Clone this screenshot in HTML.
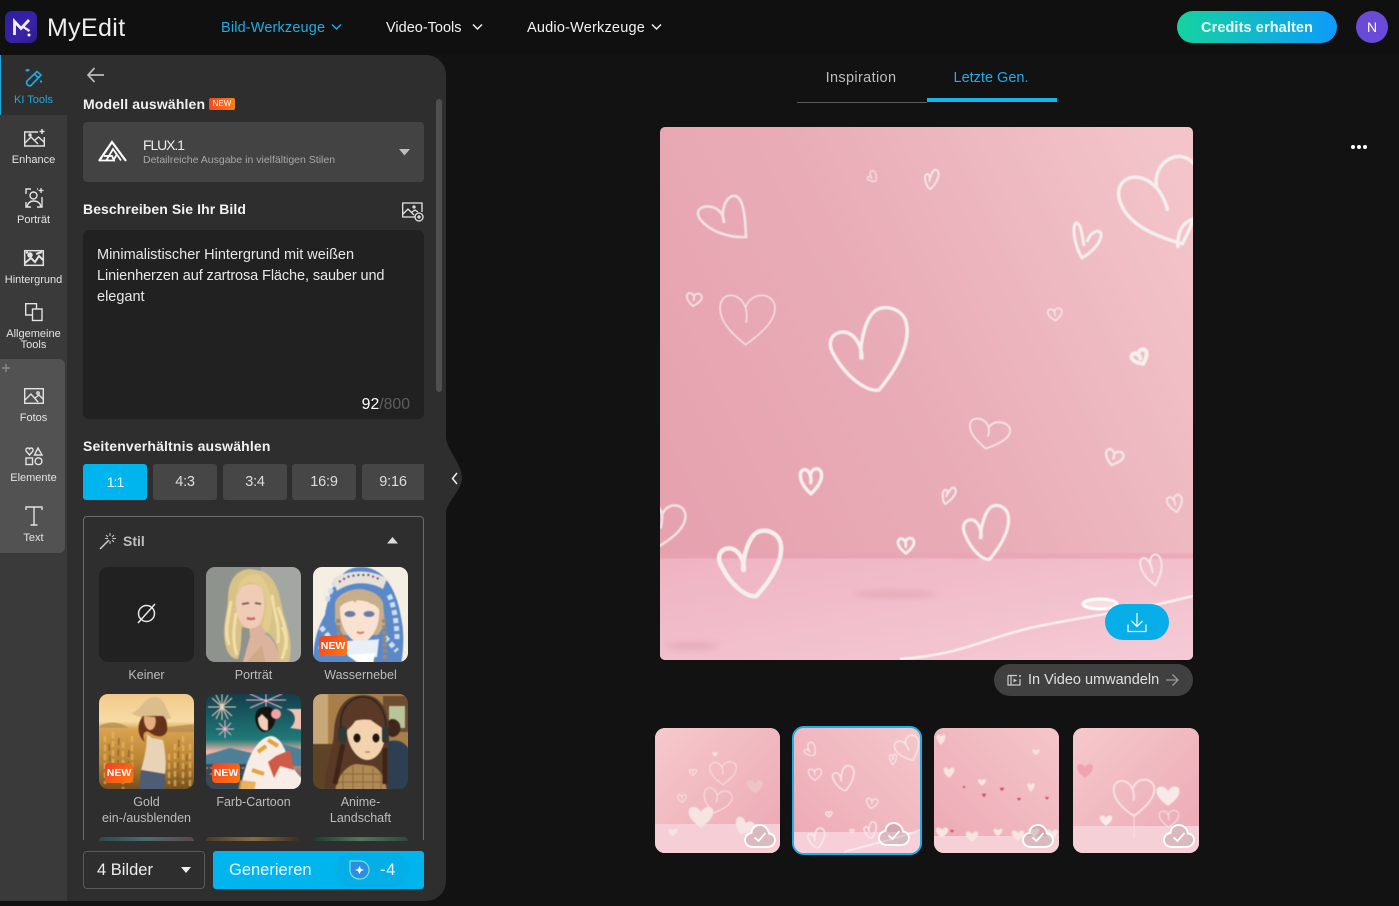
<!DOCTYPE html>
<html lang="de"><head><meta charset="utf-8"><title>MyEdit</title>
<style>
*{box-sizing:border-box;margin:0;padding:0}
html,body{width:1399px;height:906px;overflow:hidden;background:#121212;font-family:"Liberation Sans",sans-serif;color:#eee}
.a{position:absolute}
.t{position:absolute;white-space:nowrap;line-height:1}
.c{transform:translateX(-50%);text-align:center}
svg{display:block;overflow:visible}
.rl{position:absolute;left:0;width:67px;text-align:center;font-size:11px;line-height:11px;color:#e4e4e4}
.ic{position:absolute;fill:none;stroke:#e2e2e2;stroke-width:1.4}
.nav{position:absolute;top:21px;font-size:14.5px;line-height:15px;white-space:nowrap;color:#f2f2f2}
.ar{position:absolute;top:464px;height:36px;background:#464646;border-radius:3px;font-size:14px;line-height:37px;text-align:center;color:#ddd;letter-spacing:-.2px}
.st{position:absolute;width:95px;height:95px;border-radius:9px;overflow:hidden}
.st svg{filter:blur(.45px)}
.new{position:absolute;left:6px;top:69px;width:28px;height:20px;border-radius:4px;background:linear-gradient(135deg,#ef3f25,#ff7a10);font-size:10.5px;font-weight:bold;line-height:20px;text-align:center;color:#fff}
.sl{position:absolute;width:107px;text-align:center;font-size:12.5px;line-height:16px;color:#bdbdbd}
.th{position:absolute;overflow:hidden;border-radius:10px}
.hd{font-size:14px;font-weight:bold;color:#f2f2f2;letter-spacing:.08px}
</style></head><body>
<svg width="0" height="0" style="position:absolute"><defs>
<path id="h" d="M0 42C-30 22-46 4-44-16C-42-36-14-38-3-14C0-6 0 4-1 8M-3-14C4-40 40-40 44-18C47 4 24 24 0 42" fill="none" vector-effect="non-scaling-stroke" stroke-linecap="round" stroke-linejoin="round"/>
<path id="j" transform="translate(-868 -349)" d="M861 358C860 340 866 318 875 311C884 304 902 308 906 322C911 340 900 365 879 390C867 392 847 378 834 355C826 342 832 332 844 332C854 333 862 345 862 358" fill="none" vector-effect="non-scaling-stroke" stroke-linecap="round" stroke-linejoin="round"/>
<path id="f" d="M0 42C-30 20-46 2-44-18C-42-38-12-38 0-14C12-38 42-38 44-18C46 2 30 20 0 42Z"/>
<linearGradient id="bgm" x1="0" y1=".62" x2="1" y2=".12"><stop offset="0" stop-color="#e6a2af"/><stop offset=".45" stop-color="#e9adb7"/><stop offset="1" stop-color="#f3c5ca"/></linearGradient>
<linearGradient id="flm" x1="0" y1="0" x2="1" y2="1"><stop offset="0" stop-color="#efb3c2"/><stop offset="1" stop-color="#f5cbd6"/></linearGradient>
<linearGradient id="tbg" x1="0" y1="1" x2="1" y2="0"><stop offset="0" stop-color="#eda9b5"/><stop offset="1" stop-color="#f4c6ca"/></linearGradient>
<linearGradient id="tbg2" x1="0" y1="0" x2="1" y2="1"><stop offset="0" stop-color="#f5c9cc"/><stop offset="1" stop-color="#eca8b4"/></linearGradient>
<filter id="b" x="-5%" y="-5%" width="110%" height="110%"><feGaussianBlur stdDeviation=".5"/></filter>
<filter id="b4" x="-30%" y="-100%" width="160%" height="300%"><feGaussianBlur stdDeviation="3.500"/></filter>
<g id="cloud"><path d="M8 25H22C27 25 30 21.500 30 18C30 14 27 11.500 24 11.500C23 6 19 3 15 3C10 3 6.500 6.500 6.500 11C2.500 11.500 0 14.500 0 18C0 22 3.500 25 8 25Z" fill="rgba(120,110,110,.22)" stroke="#fff" stroke-width="1.900"/><path d="M9.500 15.500L13.500 19L20.500 11" fill="none" stroke="#fff" stroke-width="1.800"/></g>
</defs></svg>

<!-- header -->
<div class="a" style="left:0;top:0;width:1399px;height:55px;background:#101010"></div>
<div class="a" style="left:5px;top:11px;width:32px;height:32px;border-radius:7px;background:linear-gradient(135deg,#2a1fa0,#3a22a8 60%,#2c1a8c)"></div>
<svg class="a" style="left:5px;top:11px" width="32" height="32"><path d="M9.500 24V10.500L16 17.500L24 9" fill="none" stroke="#f4f0ff" stroke-width="2.800"/><path d="M18.500 16L24.500 20" fill="none" stroke="#e9e4ff" stroke-width="2.400"/><circle cx="24" cy="24" r="1.500" fill="#fff"/></svg>
<div class="t" style="left:47px;top:16px;font-size:25px;letter-spacing:.35px;color:#eee">MyEdit</div>
<div class="nav" style="left:221px;color:#1eabe6;letter-spacing:.15px">Bild-Werkzeuge</div>
<svg class="a" style="left:331px;top:23px" width="11" height="8"><path d="M1 1.500L5.500 6L10 1.500" fill="none" stroke="#1eabe6" stroke-width="1.500"/></svg>
<div class="nav" style="left:386px">Video-Tools</div>
<svg class="a" style="left:472px;top:23px" width="11" height="8"><path d="M1 1.500L5.500 6L10 1.500" fill="none" stroke="#eee" stroke-width="1.500"/></svg>
<div class="nav" style="left:527px;letter-spacing:.2px">Audio-Werkzeuge</div>
<svg class="a" style="left:651px;top:23px" width="11" height="8"><path d="M1 1.500L5.500 6L10 1.500" fill="none" stroke="#eee" stroke-width="1.500"/></svg>
<div class="a" style="left:1177px;top:11px;width:160px;height:32px;border-radius:16px;background:linear-gradient(90deg,#15d39f,#0f9bfb);text-align:center;font-size:14.500px;font-weight:bold;line-height:34px;color:#eafffa;letter-spacing:.1px">Credits erhalten</div>
<div class="a" style="left:1356px;top:11px;width:32px;height:32px;border-radius:50%;background:#6a4bd8;text-align:center;font-size:14px;line-height:33px;color:#fff">N</div>

<!-- side panel -->
<div class="a" style="left:0;top:55px;width:446px;height:846px;background:#2e2e2e;border-radius:0 20px 20px 0"></div>
<svg class="a" style="left:440px;top:430px" width="26" height="90"><path d="M6 8C8 22 22 34 22 48C22 60 8 70 6 82Z" fill="#2e2e2e"/><path d="M17 43L12.500 48.500L17 54" fill="none" stroke="#f0f0f0" stroke-width="1.500"/></svg>
<div class="a" style="left:0;top:115px;width:67px;height:786px;background:#3a3a3a"></div>
<div class="a" style="left:0;top:55px;width:1px;height:60px;background:#1ea6dc"></div>
<div class="a" style="left:0;top:359px;width:65px;height:194px;background:#525252;border-radius:0 6px 6px 0"></div>
<svg class="a" style="left:2px;top:364px" width="8" height="8"><path d="M4 0V8M0 4H8" stroke="#8a8a8a" stroke-width="1.400"/></svg>

<!-- rail icons -->
<svg class="ic" style="left:24px;top:67px;stroke:#22a7dc;stroke-width:1.700" width="20" height="20"><path d="M3 14L13 4.500L17 8L7 18.500Q5.500 19.500 3.500 18Q1.800 15.500 3 14ZM10.500 7L14 10.500"/><path d="M3 2L4 4.500M1.500 3.500L5.500 3M17 13.500V15.500M16 14.500H18"/></svg>
<svg class="ic" style="left:24px;top:129px" width="21" height="18"><path d="M14 3H.7V17H20.300V8"/><path d="M1 14L7 8L14 15M11 11L14.500 8L20 13" /><circle cx="6" cy="6" r="1" fill="#e2e2e2"/><path d="M18 0V5M15.500 2.500H20.500" stroke-width="1.500"/></svg>
<svg class="ic" style="left:25px;top:188px" width="19" height="21"><path d="M1 6V1H6M1 14V19H6M12 1H13M17 9V19H12"/><circle cx="8.500" cy="7.500" r="3.500"/><path d="M2 19C3 14 6 13 8.500 13C12 13 15 14 16 19"/><path d="M16 0V5M13.500 2.500H18.500" stroke-width="1.300"/></svg>
<svg class="ic" style="left:24px;top:250px;stroke-width:1.500" width="20" height="16"><rect x=".7" y=".7" width="18.600" height="14.600"/><circle cx="6" cy="5" r="2" fill="#e2e2e2"/><path d="M1 13L7 8L11 12L15 6L19 10M12 4L18 2M2 3L4 2" stroke-width="2"/></svg>
<svg class="ic" style="left:25px;top:303px" width="18" height="18"><path d="M7 12H.7V.7H11.500V6"/><rect x="7.500" y="6" width="9.500" height="11.500"/></svg>
<svg class="ic" style="left:24px;top:388px" width="20" height="16"><rect x=".7" y=".7" width="18.600" height="14.600"/><path d="M1 12L7 6L14 14M11 10L15 7L19 11"/><circle cx="14" cy="5" r="1.200"/></svg>
<svg class="ic" style="left:25px;top:447px" width="18" height="18"><path d="M4.500 8L1 4Q.5 1 3 1Q4 1 4.500 2Q5 1 6 1Q8.500 1 8 4Z"/><path d="M13 1L17 8H9.500Z"/><rect x="1" y="11" width="6.500" height="6.500"/><circle cx="13.500" cy="14.200" r="3.400"/></svg>
<svg class="ic" style="left:25px;top:506px;stroke-width:1.400" width="18" height="20"><path d="M1 4V1H17V4M9 1V18.500M5.500 19H12.500"/></svg>
<div class="rl" style="top:95px;color:#22a7dc">KI Tools</div>
<div class="rl" style="top:155px">Enhance</div>
<div class="rl" style="top:215px">Porträt</div>
<div class="rl" style="top:275px">Hintergrund</div>
<div class="rl" style="top:329px">Allgemeine<br>Tools</div>
<div class="rl" style="top:413px">Fotos</div>
<div class="rl" style="top:473px">Elemente</div>
<div class="rl" style="top:533px">Text</div>

<!-- panel content -->
<svg class="a" style="left:86px;top:66px" width="19" height="18"><path d="M8.500 2L2 9L8.500 16M2 9H18" fill="none" stroke="#bbb" stroke-width="1.700"/></svg>
<div class="t hd" style="left:83px;top:97px;letter-spacing:.15px">Modell auswählen</div>
<div class="a" style="left:209px;top:98px;width:26px;height:12px;border-radius:2px;background:linear-gradient(90deg,#f14a22,#fb7d15);font-size:8px;line-height:12px;text-align:center;color:#fff">NEW</div>
<div class="a" style="left:83px;top:122px;width:341px;height:60px;background:#434343;border-radius:4px"></div>
<svg class="a" style="left:98px;top:140px" width="30" height="22"><path d="M1 21L14 2L28 21" fill="none" stroke="#fff" stroke-width="2.200"/><path d="M1 20.500H16L14 16H6M8 21L15 9L23 20.500M15 21L19 14" fill="none" stroke="#fff" stroke-width="1.800"/></svg>
<div class="t" style="left:143px;top:138px;font-size:14px;letter-spacing:-1.100px;color:#eee">FLUX.1</div>
<div class="t" style="left:143px;top:155px;font-size:10.500px;color:#a8a8a8">Detailreiche Ausgabe in vielfältigen Stilen</div>
<svg class="a" style="left:399px;top:149px" width="11" height="7"><path d="M0 0H11L5.500 6.500Z" fill="#bdbdbd"/></svg>
<div class="t hd" style="left:83px;top:202px">Beschreiben Sie Ihr Bild</div>
<svg class="a" style="left:402px;top:202px;fill:none;stroke:#e6e6e6;stroke-width:1.300" width="22" height="20"><path d="M14 15H.7V1H20V10"/><path d="M1 12L6 7L12 13M10 10L13 8L16 10"/><circle cx="12" cy="5" r="1"/><circle cx="17" cy="15" r="4" fill="#2e2e2e"/><path d="M17 13V17M15 15H19"/></svg>
<div class="a" style="left:83px;top:230px;width:341px;height:189px;background:#212121;border-radius:6px"></div>
<div class="a" style="left:97px;top:245px;width:310px;font-size:14.500px;line-height:21px;color:#e8e8e8">Minimalistischer Hintergrund mit weißen<br><span style="letter-spacing:-.1px">Linienherzen auf zartrosa Fläche, sauber und</span><br>elegant</div>
<div class="t" style="right:989px;top:397px;font-size:15.800px;color:#fff">92<span style="color:#5d5d5d">/800</span></div>
<div class="a" style="left:436px;top:99px;width:6px;height:293px;background:#4f4f4f;border-radius:3px"></div>
<div class="t hd" style="left:83px;top:439px;letter-spacing:.15px">Seitenverhältnis auswählen</div>
<div class="ar" style="left:83px;width:64px;background:#00b5ee;color:#e8fbff;letter-spacing:-1px">1:1</div>
<div class="ar" style="left:153px;width:64px;font-size:14.500px">4:3</div>
<div class="ar" style="left:223px;width:64px;font-size:14.500px">3:4</div>
<div class="ar" style="left:292px;width:64px;font-size:14.500px">16:9</div>
<div class="ar" style="left:362px;width:62px;border-radius:3px 0 0 3px;font-size:14.500px">9:16</div>

<div class="a" style="left:83px;top:516px;width:341px;height:324px;border:1px solid #6a6a6a;border-bottom:0;border-radius:4px 4px 0 0"></div>
<svg class="a" style="left:99px;top:532px" width="18" height="18"><path d="M1 17L10 8" stroke="#ccc" stroke-width="1.500"/><path d="M11 1V4M11 9V12M6 6.500H9M13.500 6.500H17M7 3L9 5M15 3L13 5M15 10L13 8" stroke="#ccc" stroke-width="1"/></svg>
<div class="t" style="left:123px;top:534px;font-size:14px;font-weight:bold;color:#bdbdbd">Stil</div>
<svg class="a" style="left:387px;top:537px" width="11" height="7"><path d="M0 6.500H11L5.500 0Z" fill="#dcdcdc"/></svg>

<!-- styles row 1 -->
<div class="st" style="left:99px;top:567px;background:#212121"></div>
<svg class="a" style="left:136px;top:603px" width="21" height="21"><circle cx="10.500" cy="10.500" r="8" fill="none" stroke="#e8e8e8" stroke-width="1.500"/><path d="M2 20L19 1" stroke="#e8e8e8" stroke-width="1.500"/></svg>
<div class="st" style="left:206px;top:567px"><svg width="95" height="95" viewBox="0 0 95 95">
<rect x="-3" y="-3" width="101" height="101" fill="#8f938e"/><rect x="55" y="-3" width="43" height="101" fill="#a3a7a2"/>
<path d="M44 2C28 3 22 16 22 32C21 48 15 62 20 80C22 88 27 92 32 92C36 80 35 66 36 60L62 66C70 72 74 84 72 98H82C87 84 84 66 79 52C74 36 74 12 56 4Z" fill="#d9c287"/>
<path d="M25 34C23 50 18 62 23 78M30 46C28 60 26 74 31 88M66 28C68 46 74 56 72 76M72 40C76 52 82 62 80 82M76 60C82 70 80 80 76 92" stroke="#f1dfa8" stroke-width="3" fill="none"/>
<path d="M43 58L44 70L36 98H74C73 84 68 72 60 68L55 58Z" fill="#dcb49c"/>
<path d="M31 26C28 40 31 52 37 58C42 63 49 62 53 58C59 50 60 32 56 22C50 14 36 16 31 26Z" fill="#f0ccb6"/>
<path d="M32 28C36 16 46 10 56 22C62 32 60 48 56 60L62 66C68 50 68 24 54 8C42 4 30 14 32 28Z" fill="#e2cb8f"/>
<path d="M36 37L43 36M49 36L55 37" stroke="#6a5d52" stroke-width="1.800"/><path d="M41 51Q45 53 49 51" stroke="#c06a68" stroke-width="2.500" fill="none"/>
<path d="M38 98L56 78L60 98Z" fill="#cda98a"/>
</svg></div>
<div class="st" style="left:313px;top:567px"><svg width="95" height="95" viewBox="0 0 95 95">
<rect x="-3" y="-3" width="101" height="101" fill="#f5eee3"/>
<path d="M0 98C0 76 4 62 12 48C16 25 25 0 48 0C72 0 84 25 88 50C92 68 90 85 88 98Z" fill="#5b89c8"/>
<path d="M14 34C18 20 24 12 30 8M76 28C82 40 84 60 84 72M8 60L16 70M6 82L20 78M72 70L84 84" stroke="#cfe0f2" stroke-width="5" fill="none" stroke-dasharray="5 3"/>
<path d="M20 12C35 2 60 2 74 12L70 22C56 14 38 14 24 24Z" fill="#e6e2da"/>
<path d="M26 15L34 10L44 8L56 8L66 12" stroke="#7a4a6a" stroke-width="2" stroke-dasharray="2 3" fill="none"/>
<path d="M22 36C28 18 64 18 70 36L72 58L65 68H30L22 55Z" fill="#c9ae8c"/>
<path d="M27 40C36 30 58 32 66 42C68 58 58 76 47 76C35 74 26 58 27 40Z" fill="#f9e2d2"/>
<path d="M26 40L34 26L42 36L48 26L56 36L68 40C66 28 56 22 46 22C36 22 28 28 26 40Z" fill="#c9ae8c"/>
<ellipse cx="37" cy="47" rx="5.500" ry="3" fill="#6a7ba0"/><ellipse cx="56" cy="47" rx="5.500" ry="3" fill="#6a7ba0"/>
<path d="M44 65Q47 67 51 65" stroke="#d8796b" stroke-width="2" fill="none"/>
<path d="M28 76C36 72 56 74 66 72L64 90H36Z" fill="#e8eff6"/>
<path d="M25 52L27 84M71 52L72 92" stroke="#a08a6c" stroke-width="4" stroke-dasharray="4 2"/>
<path d="M34 88L48 98H60L62 86Z" fill="#fff"/>
</svg><div class="new">NEW</div></div>
<div class="sl" style="left:93px;top:667px">Keiner</div>
<div class="sl" style="left:200px;top:667px">Porträt</div>
<div class="sl" style="left:307px;top:667px">Wassernebel</div>

<!-- styles row 2 -->
<div class="st" style="left:99px;top:694px"><svg width="95" height="95" viewBox="0 0 95 95">
<defs><linearGradient id="gs" x1="0" y1="0" x2="0" y2="1"><stop offset="0" stop-color="#f0c888"/><stop offset=".3" stop-color="#f8dca4"/><stop offset=".38" stop-color="#d9a24e"/><stop offset=".7" stop-color="#b98334"/><stop offset="1" stop-color="#6e4a1c"/></linearGradient></defs>
<rect x="-3" y="-3" width="101" height="101" fill="url(#gs)"/>
<path d="M0 32Q16 24 30 34H0ZM62 34L95 30V38H62Z" fill="#b58c50" opacity=".8"/>
<path d="M6 42V90M14 38V85M24 48V95M33 42V88M76 50V95M84 42V90M70 60V90M91 50V95" stroke="#e8b862" stroke-width="2.500" stroke-dasharray="6 3" opacity=".7"/>
<path d="M10 50L12 92M20 44L18 90M30 56L28 95M80 46L78 95M88 60L86 95" stroke="#7f5720" stroke-width="1.500" stroke-dasharray="7 4" opacity=".7"/>
<path d="M32 19C42 17 44 5 54 3C64 2 66 12 72 24C62 28 44 26 32 19Z" fill="#dcbd8c"/>
<path d="M44 22C36 32 40 44 46 48C42 40 46 36 50 38C60 46 70 42 68 32C68 26 66 24 64 22Z" fill="#67321a"/>
<path d="M45 22C44 30 48 37 52 36C56 35 58 28 56 23Z" fill="#e7ab7c"/>
<path d="M48 40L53 44L64 46C66 56 68 70 66 80L42 76C46 62 48 52 48 40Z" fill="#e8d3b6"/>
<path d="M42 76L66 80V98H40Z" fill="#4e5c74"/>
</svg><div class="new">NEW</div></div>
<div class="st" style="left:206px;top:694px"><svg width="95" height="95" viewBox="0 0 95 95">
<defs><linearGradient id="cs" x1="0" y1="0" x2="0" y2="1"><stop offset="0" stop-color="#123a48"/><stop offset=".48" stop-color="#1f7b78"/><stop offset=".6" stop-color="#f3b3a6"/><stop offset="1" stop-color="#32424e"/></linearGradient></defs>
<rect x="-3" y="-3" width="101" height="101" fill="url(#cs)"/>
<g stroke="#f4d4bd" stroke-width="1"><path d="M2 13L30 13M16 0L16 26M6 4L26 22M26 4L6 22M10 1L22 25M22 1L10 25"/></g>
<g stroke="#f0b8d0" stroke-width="1"><path d="M40 6L80 6M60 0L60 20M44 0L76 14M76 0L44 14"/></g>
<g stroke="#f7b6d0" stroke-width="1"><path d="M10 35H28M19 26V44M13 29L25 41M25 29L13 41"/></g>
<path d="M80 15C92 18 90 30 84 34L98 36V15Z" fill="#f0c2b6"/>
<path d="M-3 62L24 54L50 60L76 50L98 56V72H-3Z" fill="#4e7f96"/>
<rect x="-3" y="70" width="43" height="28" fill="#3a4854"/><path d="M0 74H40M4 80H36" stroke="#e8c47a" stroke-dasharray="2 2"/>
<path d="M55 14C46 16 48 36 58 38C68 38 72 24 68 16C64 12 60 12 55 14Z" fill="#17140f"/><path d="M52 24C52 34 58 38 62 36V26L56 20Z" fill="#f1cfb8"/>
<circle cx="70" cy="20" r="5" fill="#f3a3a0"/>
<path d="M34 98C38 70 50 42 66 42C82 46 78 70 98 86V98Z" fill="#f7ede6"/>
<path d="M70 62L84 56L88 76L74 72L68 84L62 68Z" fill="#cf5a48"/><path d="M52 58L60 52M46 76L58 80M62 46L72 52" stroke="#e8a13c" stroke-width="4"/>
<path d="M34 86L50 88L48 98H32Z" fill="#e8a13c" opacity=".8"/>
</svg><div class="new">NEW</div></div>
<div class="st" style="left:313px;top:694px"><svg width="95" height="95" viewBox="0 0 95 95">
<rect x="-3" y="-3" width="101" height="101" fill="#a87f4a"/><rect width="15" height="50" fill="#c9a878"/><rect x="70" y="2" width="28" height="36" fill="#6e4c30"/><rect x="76" y="12" width="16" height="22" fill="#b9c49a"/><rect x="-3" y="50" width="27" height="48" fill="#5e4426"/><rect x="68" y="60" width="30" height="6" fill="#c9a26c"/>
<path d="M80 25C71 25 71 41 79 43C89 43 91 27 80 25Z" fill="#3f2618"/><path d="M72 48C86 44 92 48 98 58V98H70Z" fill="#2f3f52"/>
<path d="M50 1C30 1 22 18 21 38C20 58 10 78 12 98H74C76 78 74 50 76 34C74 12 66 1 50 1Z" fill="#5a3a26"/>
<path d="M34 32C36 24 68 22 72 34C74 50 66 66 54 66C44 66 32 50 34 32Z" fill="#f3d3ae"/>
<path d="M34 36C42 30 44 22 50 18C56 26 64 30 72 36C72 20 62 10 52 10C42 10 32 22 34 36Z" fill="#5a3a26"/>
<ellipse cx="44" cy="44" rx="3.500" ry="4.500" fill="#1e1610"/><ellipse cx="63" cy="44" rx="3.500" ry="4.500" fill="#1e1610"/><path d="M52 58H57" stroke="#b9765c" stroke-width="1.200"/>
<path d="M22 98C24 80 36 70 44 70L60 72C68 76 72 84 74 98Z" fill="#b08a54"/><path d="M30 78V98M40 72V98M50 72V98M60 74V98M68 80V98M24 88H72M28 80H68" stroke="#8a6a3c" stroke-width="1"/>
<rect x="25" y="32" width="9" height="17" rx="4" fill="#2e3a33"/><rect x="69" y="32" width="7" height="17" rx="3" fill="#2e3a33"/>
<path d="M28 34C26 14 38 3 50 3C62 3 72 14 73 32" fill="none" stroke="#2a2622" stroke-width="1.500"/>
<path d="M30 50L22 90M72 54L72 90" stroke="#3e2517" stroke-width="5"/>
</svg></div>
<div class="sl" style="left:93px;top:794px">Gold<br>ein-/ausblenden</div>
<div class="sl" style="left:200px;top:794px">Farb-Cartoon</div>
<div class="sl" style="left:307px;top:794px">Anime-<br>Landschaft</div>
<!-- clipped next row -->
<div class="a" style="left:99px;top:837px;width:95px;height:4px;border-radius:8px 8px 0 0;background:linear-gradient(90deg,#2e4a4a,#4e6a72,#5a4a4a)"></div>
<div class="a" style="left:206px;top:837px;width:95px;height:4px;border-radius:8px 8px 0 0;background:linear-gradient(90deg,#4e3a26,#8a6c40,#3a2a20)"></div>
<div class="a" style="left:313px;top:837px;width:95px;height:4px;border-radius:8px 8px 0 0;background:linear-gradient(90deg,#1e3a30,#4e7a5a,#2a4a40)"></div>
<div class="a" style="left:83px;top:841px;width:341px;height:60px;background:#2e2e2e"></div>

<!-- bottom actions -->
<div class="a" style="left:83px;top:851px;width:122px;height:38px;border:1px solid #5a5a5a;border-radius:4px"></div>
<div class="t" style="left:97px;top:862px;font-size:16.500px;color:#eee">4 Bilder</div>
<svg class="a" style="left:181px;top:867px" width="10" height="6"><path d="M0 0H10L5 6Z" fill="#eee"/></svg>
<div class="a" style="left:213px;top:851px;width:211px;height:38px;background:#00b5ee;border-radius:3px"></div>
<div class="t" style="left:229px;top:862px;font-size:16.500px;color:#e6fbff">Generieren</div>
<div class="a" style="left:335px;top:853px;width:74px;height:34px;border-radius:17px;background:#04aee6"></div>
<svg class="a" style="left:349px;top:860px" width="21" height="20"><path d="M1 1H11C16 1 20 5 20 10C20 15 16 19 11 19C5 19 1 15 1 10Z" fill="#2b8fe0" stroke="#77e0d6" stroke-width="1.200"/><path d="M10.500 6L12 9L15 10L12 11L10.500 14L9 11L6 10L9 9Z" fill="#fff"/></svg>
<div class="t" style="left:380px;top:862px;font-size:16.500px;color:#e6fbff;letter-spacing:.6px">-4</div>

<!-- tabs -->
<div class="t c" style="left:861px;top:71px;font-size:14.500px;color:#bdbdbd;letter-spacing:.35px">Inspiration</div>
<div class="t c" style="left:991px;top:71px;font-size:14.500px;color:#1eaee6">Letzte Gen.</div>
<div class="a" style="left:797px;top:102px;width:130px;height:1px;background:#5a5a5a"></div>
<div class="a" style="left:927px;top:98px;width:130px;height:4px;background:#14b4ec"></div>
<div class="a" style="left:1351px;top:145px;width:4px;height:4px;border-radius:50%;background:#fff;box-shadow:6px 0 #fff,12px 0 #fff"></div>

<!-- main image -->
<svg class="a" style="left:660px;top:127px;border-radius:5px;overflow:hidden" width="533" height="533" viewBox="660 127 533 533">
<rect x="660" y="127" width="533" height="533" fill="url(#bgm)"/>
<rect x="660" y="558" width="533" height="102" fill="url(#flm)"/>
<rect x="650" y="553" width="553" height="6" fill="#e9a2b2" opacity=".55" filter="url(#b)"/>
<ellipse cx="895" cy="594" rx="42" ry="3" fill="#d898a6" opacity=".6" filter="url(#b4)"/>
<ellipse cx="692" cy="646" rx="26" ry="3" fill="#d898a6" opacity=".6" filter="url(#b4)"/>
<g stroke="#f5efed" filter="url(#b)">
<path d="M724 223C721 212 724 200 732 196C741 194 745 206 746 237C730 238 710 232 700 219C694 210 702 205 712 207C720 209 724 216 724 223" fill="none" stroke-width="2.600" opacity=".85"/>
<use href="#j" transform="translate(872 177) rotate(-30) scale(.13)" stroke-width="1.500" opacity=".7"/>
<use href="#j" transform="translate(931 179) rotate(12) scale(.17 .24)" stroke-width="2" opacity=".85"/>
<use href="#h" transform="translate(1165 201) rotate(-22) scale(.95 1.1)" stroke-width="3.500"/>
<path d="M1193 219C1184 222 1177 230 1178 248" fill="none" stroke-width="3.500"/>
<path d="M1084 246C1082 232 1080 222 1076 223C1072 226 1074 245 1082 258C1092 252 1102 242 1101 234C1100 228 1090 232 1087 242" fill="none" stroke-width="3"/>
<use href="#h" transform="translate(694 299) rotate(8) scale(.17)" stroke-width="2" opacity=".8"/>
<use href="#h" transform="translate(747 317) rotate(3) scale(.62 .66)" stroke-width="1.500" opacity=".85"/>
<use href="#j" transform="translate(868 349)" stroke-width="3.500"/>
<use href="#h" transform="translate(1055 314) rotate(-5) scale(.16)" stroke-width="1.800" opacity=".8"/>
<use href="#h" transform="translate(1140 357) rotate(-25) scale(.18)" stroke-width="4"/>
<use href="#h" transform="translate(989 433) rotate(12) scale(.46 .38)" stroke-width="1.800" opacity=".85"/>
<use href="#h" transform="translate(1114 457) rotate(18) scale(.2)" stroke-width="2.500" opacity=".85"/>
<use href="#h" transform="translate(811 480) scale(.24 .33)" stroke-width="3.500"/>
<use href="#j" transform="translate(948 495) rotate(25) scale(.15 .22)" stroke-width="2.200" opacity=".85"/>
<use href="#j" transform="translate(985 532) rotate(4) scale(.58 .66)" stroke-width="3.200"/>
<use href="#h" transform="translate(1175 503) rotate(-12) scale(.17 .22)" stroke-width="2" opacity=".8"/>
<use href="#h" transform="translate(906 545) scale(.18 .2)" stroke-width="2.800"/>
<use href="#h" transform="translate(1152 569) rotate(-12) scale(.24 .4)" stroke-width="2" opacity=".85"/>
<use href="#h" transform="translate(662 523) rotate(10) scale(.5 .58)" stroke-width="2.500" opacity=".85"/>
<use href="#j" transform="translate(749 563) rotate(3) scale(.8)" stroke-width="4.500"/>
</g>
<g filter="url(#b)"><ellipse cx="1100" cy="604" rx="17" ry="5" fill="#f6dfe0" stroke="#fff" stroke-width="3"/>
<path d="M900 659C960 655 980 640 1030 628C1090 615 1130 612 1193 596" fill="none" stroke="#fbf1ee" stroke-width="2.500"/></g>
</svg>
<div class="a" style="left:1105px;top:604px;width:64px;height:36px;border-radius:18px;background:#07aee8"></div>
<svg class="a" style="left:1127px;top:612px" width="20" height="21"><path d="M10 1V14M4.500 9L10 14.500L15.500 9M1 12.500V19.500H19V12.500" fill="none" stroke="#e6f8ff" stroke-width="1.300"/></svg>
<div class="a" style="left:994px;top:664px;width:199px;height:32px;border-radius:16px;background:#404040"></div>
<svg class="a" style="left:1007px;top:674px" width="15" height="12"><path d="M1 1.500H10V1.500M1 1.500V11H13V5" fill="none" stroke="#ccc" stroke-width="1.200"/><path d="M4 1.500V11" stroke="#ccc" stroke-width="1.200"/><path d="M6.500 4.500L10 6.500L6.500 8.500Z" fill="#ccc"/><circle cx="13" cy="2" r="1" fill="#ccc"/></svg>
<div class="t" style="left:1028px;top:673px;font-size:14.500px;color:#e0e0e0">In Video umwandeln</div>
<svg class="a" style="left:1165px;top:673px" width="14" height="14"><path d="M1 7H13M7.500 1.500L13 7L7.500 12.500" fill="none" stroke="#9a9a9a" stroke-width="1.300"/></svg>

<!-- thumbs -->
<div class="th" style="left:655px;top:728px;width:125px;height:125px;background:#f0b9c0"><svg width="125" height="125">
<rect width="125" height="125" fill="url(#tbg2)"/><rect y="96" width="125" height="29" fill="#f6cfd6"/>
<g filter="url(#b)">
<g stroke="#f8e2e0"><use href="#h" transform="translate(68 44) scale(.3)" stroke-width="1"/><use href="#h" transform="translate(62 72) rotate(15) scale(.32)" stroke-width="1"/><use href="#h" transform="translate(38 44) scale(.08)" stroke-width="1"/><use href="#h" transform="translate(27 70) scale(.1)" stroke-width="1"/></g>
<g fill="#f6e4e2"><use href="#f" transform="translate(46 88) scale(.28)"/><use href="#f" transform="translate(89 98) rotate(25) scale(.22)"/><use href="#f" transform="translate(100 58) scale(.18)" fill="#eec4c6"/><use href="#f" transform="translate(18 104) scale(.1)"/><use href="#f" transform="translate(60 26) scale(.06)"/></g>
</g><use href="#cloud" transform="translate(90 94)"/></svg></div>
<div class="th" style="left:792px;top:726px;width:130px;height:129px;border:2px solid #17b2e8;border-radius:12px;background:#f0b9c0"><svg width="126" height="125">
<rect width="126" height="125" fill="url(#tbg)"/><rect y="104" width="126" height="21" fill="#f6cfd8"/>
<g filter="url(#b)">
<g stroke="#f8efee"><use href="#j" transform="translate(16 22) rotate(-30) scale(.16)" stroke-width="1"/><use href="#h" transform="translate(114 20) rotate(-22) scale(.28 .32)" stroke-width="1.200"/><use href="#h" transform="translate(99 31) scale(.08 .14)" stroke-width="1"/><use href="#h" transform="translate(21 46) scale(.15)" stroke-width="1"/><use href="#j" transform="translate(49 50) scale(.28 .3)" stroke-width="1.300"/><use href="#h" transform="translate(78 75) rotate(10) scale(.13)" stroke-width="1"/><use href="#h" transform="translate(35 86) scale(.07)" stroke-width="1.200"/><use href="#j" transform="translate(76 102) scale(.16 .2)" stroke-width="1.200"/><use href="#j" transform="translate(22 110) scale(.22 .24)" stroke-width="1.400"/><use href="#h" transform="translate(58 103) scale(.05)" stroke-width="1"/></g>
<path d="M50 124C70 118 100 112 126 102" stroke="#fff" stroke-width="1" fill="none"/>
</g><use href="#cloud" transform="translate(85 92)"/></svg></div>
<div class="th" style="left:934px;top:728px;width:125px;height:125px;background:#f0b9c0"><svg width="125" height="125">
<rect width="125" height="125" fill="url(#tbg)"/><rect y="108" width="125" height="17" fill="#f5d0d6"/>
<g filter="url(#b)">
<g fill="#f7e5e0"><use href="#f" transform="translate(7 11) scale(.1 .14)"/><use href="#f" transform="translate(15 44) scale(.12 .14)"/><use href="#f" transform="translate(48 54) scale(.09)"/><use href="#f" transform="translate(97 59) scale(.08 .12)"/><use href="#f" transform="translate(102 24) scale(.08)"/><use href="#f" transform="translate(8 104) scale(.14)"/><use href="#f" transform="translate(38 108) scale(.14)"/><use href="#f" transform="translate(64 104) scale(.1)"/><use href="#f" transform="translate(84 107) scale(.14)"/><use href="#f" transform="translate(118 106) scale(.14)"/><use href="#f" transform="translate(100 104) scale(.12)"/></g>
<g fill="#d64a5c"><use href="#f" transform="translate(30 59) scale(.03)"/><use href="#f" transform="translate(50 67) scale(.045)"/><use href="#f" transform="translate(68 61) scale(.045)"/><use href="#f" transform="translate(85 71) scale(.04)"/><use href="#f" transform="translate(113 70) scale(.04)"/><use href="#f" transform="translate(18 103) scale(.04)"/></g>
</g><use href="#cloud" transform="translate(89 94)"/></svg></div>
<div class="th" style="left:1073px;top:728px;width:126px;height:125px;background:#f0b9c0"><svg width="126" height="125">
<rect width="126" height="125" fill="url(#tbg2)"/><rect y="98" width="126" height="27" fill="#f6d0d7"/>
<g filter="url(#b)">
<use href="#f" transform="translate(12 42) scale(.18)" fill="#eea3ae"/>
<g stroke="#f6e6e4"><use href="#h" transform="translate(61 68) scale(.46 .48)" stroke-width="1.800"/><use href="#h" transform="translate(96 90) scale(.22)" stroke-width="1"/></g>
<path d="M61 86V110" stroke="#f5e4e2" stroke-width="1"/>
<g fill="#f8eae8"><use href="#f" transform="translate(95 67) scale(.26)"/><use href="#f" transform="translate(33 92) scale(.14)"/></g>
</g><use href="#cloud" transform="translate(91 94)"/></svg></div>
</body></html>
